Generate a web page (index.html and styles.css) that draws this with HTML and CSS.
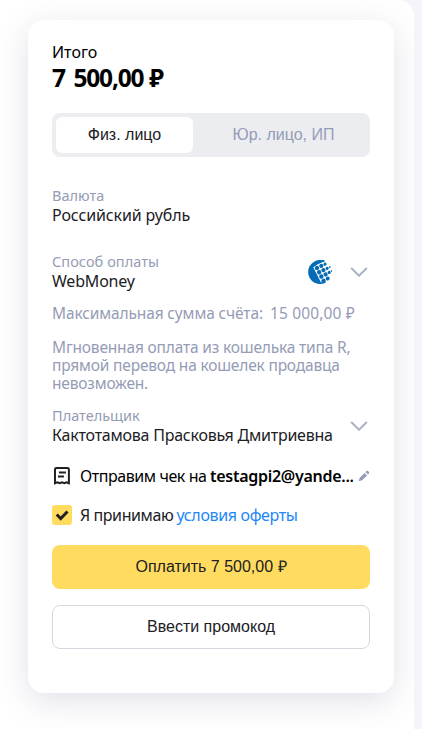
FILE: index.html
```html
<!DOCTYPE html>
<html lang="ru">
<head>
<meta charset="utf-8">
<title>Оплата</title>
<link rel="stylesheet" href="styles.css">
</head>
<body>
<main class="page">
  <section class="card">
    <div class="total-label"><span>Итого</span></div>
    <div class="total-sum"><span>7 500,00</span><span class="total-currency">₽</span></div>

    <div class="tabs">
      <button class="tab tab-active">Физ. лицо</button>
      <button class="tab tab-company">Юр. лицо, ИП</button>
    </div>

    <div class="field field-currency">
      <div class="field-text">
        <div class="label label-currency">Валюта</div>
        <div class="value value-currency">Российский рубль</div>
      </div>
    </div>

    <div class="field field-method">
      <div class="field-text">
        <div class="label label-method">Способ оплаты</div>
        <div class="value value-method">WebMoney</div>
      </div>
      <svg class="logo" viewBox="0 0 24 24">
        <path fill="#036cb5" d="M17.500 1.300A12 12 0 1 0 18 22.500L14 20 6.500 6.500 11 3.500z"/>
        <g fill="#036cb5" transform="translate(14.200 11.200) rotate(-27)">
          <path fill="#fff" d="M-6.200-7.600h14V9.600H-6.200z"/>
          <circle cx="-3.200" cy="-5.200" r="2.200"/><circle cx="1.600" cy="-5.200" r="2.100"/><circle cx="5.700" cy="-5" r="1.600"/>
          <circle cx="-3.200" cy="-.4" r="2.200"/><circle cx="1.600" cy="-.4" r="2.100"/><circle cx="5.700" cy="-.3" r="1.600"/><circle cx="8.700" cy="-.2" r=".9"/>
          <circle cx="-3.200" cy="4.400" r="2.200"/><circle cx="1.600" cy="4.400" r="2.100"/><circle cx="5.700" cy="4.300" r="1.600"/><circle cx="8.700" cy="4.200" r=".9"/>
          <circle cx="-3.200" cy="9.200" r="2.200"/><circle cx="1.600" cy="9" r="2"/>
          <circle cx="1.800" cy="-9.300" r="1.300"/><circle cx="5.700" cy="-8.800" r="1.100"/>
        </g>
      </svg>
      <svg class="chevron" viewBox="0 0 18 10"><path d="M1.200 1L9 8.700 16.800 1"/></svg>
    </div>

    <p class="note note-limit"><span class="limit-label">Максимальная сумма счёта:</span><span class="limit-sum">15 000,00 ₽</span></p>
    <p class="note note-info">Мгновенная оплата из кошелька типа R,<br>прямой перевод на кошелек продавца<br>невозможен.</p>

    <div class="field field-payer">
      <div class="field-text">
        <div class="label label-payer">Плательщик</div>
        <div class="value value-payer">Кактотамова Прасковья Дмитриевна</div>
      </div>
      <svg class="chevron" viewBox="0 0 18 10"><path d="M1.200 1L9 8.700 16.800 1"/></svg>
    </div>

    <div class="row receipt">
      <svg class="receipt-icon" viewBox="0 0 20 20">
        <path d="M3 17.300V3.500Q3 2 4.500 2h11Q17 2 17 3.500v13.800l-2.300-1-2.300 1-2.400-1-2.400 1-2.300-1z"/>
        <path d="M7 6.500h7M6 10.500h6"/>
      </svg>
      <span class="receipt-text">Отправим чек на</span>
      <span class="receipt-mail">testagpi2@yande...</span>
      <svg class="pencil" viewBox="0 0 12 12"><path d="M.8 11.200l.9-3.400 4.900-4.900 2.500 2.500-4.900 4.900zM7.500 2l1-1Q9.300.3 10.100 1l.9.900q.7.800 0 1.600l-1 1z"/></svg>
    </div>

    <div class="row offer">
      <span class="checkbox"><svg viewBox="0 0 20 20"><path d="M4.700 9.500l4 4 6.800-7"/></svg></span>
      <span class="offer-text">Я принимаю</span>
      <a class="offer-link">условия оферты</a>
    </div>

    <button class="button button-pay">Оплатить 7 500,00 ₽</button>
    <button class="button button-promo">Ввести промокод</button>
  </section>
</main>
</body>
</html>
```
FILE: styles.css
```css
* { box-sizing: border-box; }
body {
  margin: 0;
  background: #f4f5f8;
  font: 16px/20px "Noto Sans", sans-serif;
  color: #21201f;
}
.page {
  width: 414px;
  height: 729px;
  padding: 20px 20px 0 28px;
  background: #fff;
  border-radius: 0 16px 0 0;
  overflow: hidden;
}
.card {
  display: flex;
  flex-direction: column;
  height: 673px;
  padding: 22px 24px 0;
  background: #fff;
  border-radius: 16px;
  box-shadow: 0 8px 32px rgba(70, 80, 120, .17);
  white-space: nowrap;
}
.total-label { height: 20px; color: #000; }
.total-sum {
  display: flex;
  gap: 6px;
  height: 32px;
  line-height: 32px;
  font-size: 24.5px;
  font-weight: 700;
  letter-spacing: -1.2px;
  word-spacing: 3.5px;
  color: #000;
}
button {
  padding: 0;
  border: 0;
  font: 16px/20px "Liberation Sans", sans-serif;
  color: #21201f;
  background: none;
}
.tabs {
  display: grid;
  grid-template-columns: 137px 1fr;
  height: 44px;
  margin-top: 19px;
  padding: 4px;
  background: #ebedf1;
  border-radius: 8px;
}
.tab { color: #959cb5; }
.tab-active { color: #21201f; background: #fff; border-radius: 6px; }
.tab-company { padding-left: 8px; }
.field { display: flex; align-items: center; height: 40px; }
.field-text { flex: 1; min-width: 0; }
.label { height: 19px; font-size: 14.5px; line-height: 19px; color: #959cb5; }
.label-method { letter-spacing: .06px; }
.value { height: 21px; line-height: 20px; letter-spacing: -.12px; }
.value-method { letter-spacing: -.2px; }
.value-payer { letter-spacing: -.24px; }
.field-currency { margin-top: 29px; }
.field-method { margin-top: 26px; }
.logo { width: 24px; height: 24px; margin-right: 18px; }
.chevron { width: 18px; height: 10px; margin-right: 2px; }
.chevron path { fill: none; stroke: #a9b1c4; stroke-width: 2; }
.note { margin: 0; color: #959cb5; font-size: 15.5px; line-height: 18px; letter-spacing: -.18px; }
.note-limit { display: flex; margin-top: 12px; }
.limit-label { width: 218px; letter-spacing: -.13px; }
.limit-sum { letter-spacing: .15px; }
.note-info { margin-top: 16px; }
.field-payer { margin-top: 14px; }
.row { display: flex; align-items: center; height: 20px; }
.receipt { margin-top: 20px; color: #000; }
.receipt-icon { width: 20px; height: 20px; margin-right: 8px; }
.receipt-icon path { fill: none; stroke: #21201f; stroke-width: 2; }
.receipt-text { width: 131px; letter-spacing: -.42px; }
.receipt-mail { width: 143px; margin-right: 5px; font-weight: 600; letter-spacing: -.28px; }
.pencil { width: 12px; height: 12px; fill: #959cb5; }
.offer { margin-top: 19px; }
.checkbox { display: flex; width: 20px; height: 20px; margin-right: 8px; background: #ffdb60; border-radius: 3px; }
.checkbox path { fill: none; stroke: #21201f; stroke-width: 3; }
.offer-text { width: 96.5px; letter-spacing: -.42px; }
.offer-link { color: #1e87f6; letter-spacing: -.35px; }
.button { height: 44px; border-radius: 8px; }
.button-pay { margin-top: 20px; background: #ffdb60; }
.button-promo { margin-top: 16px; border: 1px solid #d5d8e1; }
```
